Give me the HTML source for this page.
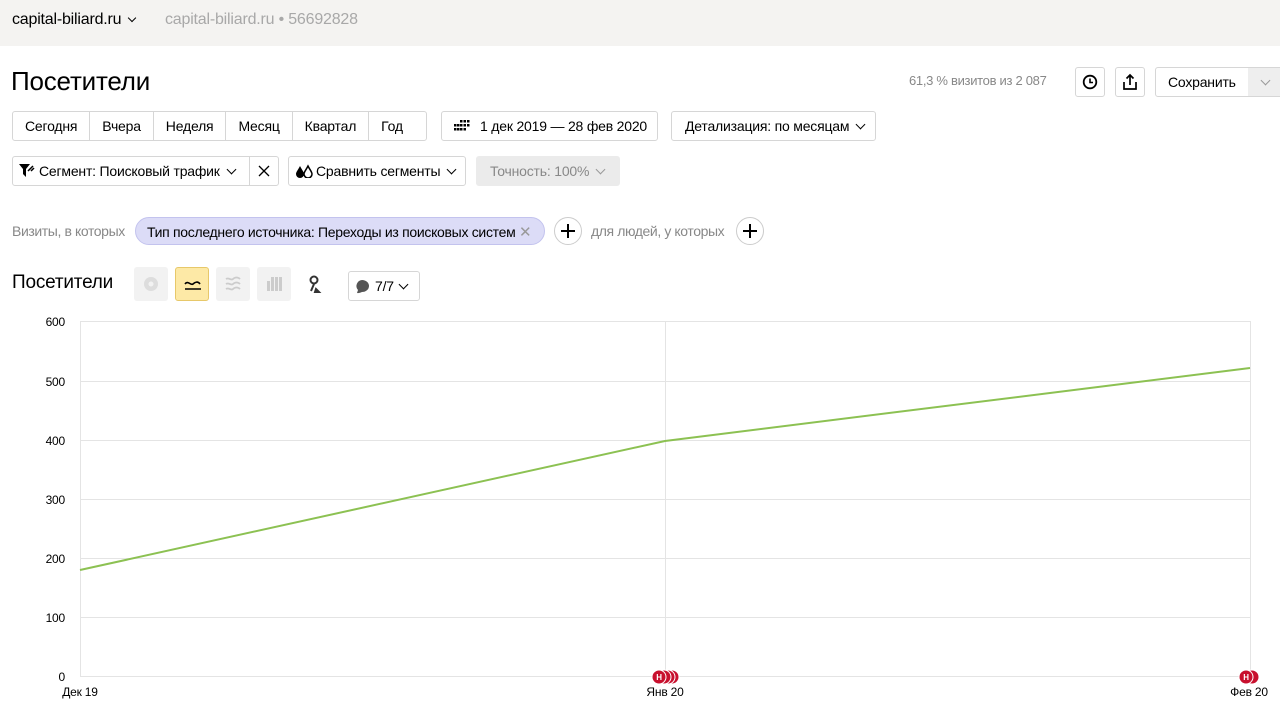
<!DOCTYPE html>
<html><head><meta charset="utf-8"><style>
*{box-sizing:border-box;margin:0;padding:0}
body{width:1280px;height:705px;background:#fff;font-family:"Liberation Sans",sans-serif;color:#000;position:relative;overflow:hidden;font-size:14px;letter-spacing:-0.2px}
.abs{position:absolute}
.top{left:0;top:0;width:1280px;height:46px;background:#f4f3f1}
.btn{position:absolute;height:30px;border:1px solid #d6d6d6;border-radius:3px;background:#fff;display:flex;align-items:center;font-size:14px;white-space:nowrap}
.seg{display:flex;height:100%;align-items:center;padding:0 12px;border-right:1px solid #d6d6d6}
.seg:last-child{border-right:none}
.chev{display:inline-block;width:7px;height:7px;border-right:1.3px solid #000;border-bottom:1.3px solid #000;transform:rotate(45deg);margin:-4px 2px 0 8px}
.gray .chev{border-color:#999}
.ib{position:absolute;width:34px;height:34px;border-radius:3px;background:#f2f2f2;top:267px}
</style></head><body>
<div class="abs top"></div>
<div class="abs" style="left:12px;top:11px;font-size:16px">capital-biliard.ru <span class="chev" style="margin:0 0 3px 3px;width:6px;height:6px;vertical-align:middle"></span></div>
<div class="abs" style="left:165px;top:11px;font-size:16px;color:#a8a8a8">capital-biliard.ru • 56692828</div>

<div class="abs" style="left:11px;top:66px;font-size:26px">Посетители</div>
<div class="abs" style="left:909px;top:73px;font-size:13px;color:#888;letter-spacing:-0.3px">61,3 % визитов из 2 087</div>
<div class="btn" style="left:1075px;top:67px;width:30px;justify-content:center"><svg width="16" height="16" viewBox="0 0 16 16"><circle cx="8" cy="8" r="6.3" fill="none" stroke="#000" stroke-width="1.8"/><path d="M8 4.5V8.5H11" fill="none" stroke="#000" stroke-width="1.6"/></svg></div>
<div class="btn" style="left:1115px;top:67px;width:30px;justify-content:center"><svg width="16" height="18" viewBox="0 0 16 18"><path d="M2 9v7h12V9M8 12V2M4.5 5.5L8 2l3.5 3.5" fill="none" stroke="#000" stroke-width="1.7"/></svg></div>
<div class="btn" style="left:1155px;top:67px;width:130px;overflow:hidden"><span style="padding:0 12px">Сохранить</span><span style="background:#eee;height:100%;flex:1;display:flex;align-items:center;padding-left:6px" class="gray"><span class="chev"></span></span></div>

<div class="btn" style="left:12px;top:111px;width:415px"><span class="seg">Сегодня</span><span class="seg">Вчера</span><span class="seg">Неделя</span><span class="seg">Месяц</span><span class="seg">Квартал</span><span class="seg">Год</span></div>
<div class="btn" style="left:441px;top:111px;width:217px;padding-left:12px"><svg width="16" height="12" viewBox="0 0 16 12" style="margin-right:10px"><g fill="#000"><rect x="6" y="0" width="2.5" height="2.5"/><rect x="9.5" y="0" width="2.5" height="2.5"/><rect x="13" y="0" width="2.5" height="2.5"/><rect x="0" y="4" width="2.5" height="2.5"/><rect x="3" y="4" width="2.5" height="2.5"/><rect x="6" y="4" width="2.5" height="2.5"/><rect x="9.5" y="4" width="2.5" height="2.5"/><rect x="13" y="4" width="2.5" height="2.5"/><rect x="0" y="8" width="2.5" height="2.5"/><rect x="3" y="8" width="2.5" height="2.5"/><rect x="6" y="8" width="2.5" height="2.5"/><rect x="9.5" y="8" width="2.5" height="2.5"/></g></svg>1 дек 2019 — 28 фев 2020</div>
<div class="btn" style="left:671px;top:111px;width:205px;padding-left:13px">Детализация: по месяцам<span class="chev"></span></div>

<div class="btn" style="left:12px;top:156px;width:267px"><span class="seg" style="padding:0 11px 0 6px;width:237px"><svg width="16" height="14" viewBox="0 0 16 14" style="margin-right:4px"><path d="M0 0h11L7 5v8L4 10V5z" fill="#000"/><path d="M9 7l5-5M12 7l3-3" stroke="#000" stroke-width="1.5"/></svg>Сегмент: Поисковый трафик<span class="chev"></span></span><span style="flex:1;display:flex;justify-content:center"><svg width="12" height="12" viewBox="0 0 12 12"><path d="M1 1l10 10M11 1L1 11" stroke="#000" stroke-width="1.3"/></svg></span></div>
<div class="btn" style="left:288px;top:156px;width:178px;padding-left:6px"><svg width="18" height="14" viewBox="0 0 18 14" style="margin-right:3px"><path d="M5 2C3 6 1 8 1 10a4 4 0 008 0c0-2-2-4-4-8z" fill="#000"/><path d="M13 2c-2 4-4 6-4 8a4 4 0 008 0c0-2-2-4-4-8z" fill="#fff" stroke="#000" stroke-width="1.5"/></svg>Сравнить сегменты<span class="chev"></span></div>
<div class="btn gray" style="left:476px;top:156px;width:144px;background:#ebebeb;border-color:#ebebeb;color:#888;padding-left:13px">Точность: 100%<span class="chev"></span></div>

<div class="abs" style="left:12px;top:223px;color:#888;font-size:14px;letter-spacing:-0.4px">Визиты, в которых</div>
<div class="abs" style="left:135px;top:217px;width:410px;height:28px;border-radius:14px;background:#dcdcf7;border:1px solid #c3c3ee;font-size:14px;padding:5px 0 0 11px;white-space:nowrap;letter-spacing:-0.3px">Тип последнего источника: Переходы из поисковых систем <span style="color:#999;font-size:15px">✕</span></div>
<div class="abs" style="left:554px;top:217px;width:28px;height:28px;border-radius:50%;border:1px solid #ccc"><svg width="28" height="28" viewBox="0 0 28 28" class="abs" style="left:-1px;top:-1px"><path d="M14 7v14M7 14h14" stroke="#000" stroke-width="2"/></svg></div>
<div class="abs" style="left:591px;top:223px;color:#888;font-size:14px;letter-spacing:-0.4px">для людей, у которых</div>
<div class="abs" style="left:736px;top:217px;width:28px;height:28px;border-radius:50%;border:1px solid #ccc"><svg width="28" height="28" viewBox="0 0 28 28" class="abs" style="left:-1px;top:-1px"><path d="M14 7v14M7 14h14" stroke="#000" stroke-width="2"/></svg></div>

<div class="abs" style="left:12px;top:272px;font-size:19px">Посетители</div>
<div class="ib" style="left:134px"><svg width="34" height="34"><circle cx="17" cy="17" r="7" fill="#ddd"/><circle cx="17" cy="17" r="2.5" fill="#f2f2f2"/></svg></div>
<div class="ib" style="left:175px;background:#fde9a6;border:1px solid #e7c86a"><svg width="34" height="34"><path d="M9 16c3-4 6 2 8 0s5-3 7 0M9 21h16" fill="none" stroke="#000" stroke-width="1.6"/></svg></div>
<div class="ib" style="left:216px"><svg width="34" height="34"><path d="M10 12c3-2 5 2 7 0s5-2 7 0M10 17c3-2 5 2 7 0s5-2 7 0M10 22c3-2 5 2 7 0s5-2 7 0" fill="none" stroke="#ccc" stroke-width="1.8"/></svg></div>
<div class="ib" style="left:257px"><svg width="34" height="34"><g fill="#ccc"><rect x="10" y="14" width="3" height="10"/><rect x="14" y="10" width="3" height="14"/><rect x="18" y="10" width="3" height="14"/><rect x="22" y="10" width="3" height="14"/></g></svg></div>
<div class="abs" style="left:298px;top:267px"><svg width="34" height="34"><circle cx="16" cy="13" r="3.5" fill="none" stroke="#333" stroke-width="2"/><path d="M13 24l3-7M18 22l3 3-4 0z" stroke="#333" stroke-width="2" fill="#333"/></svg></div>
<div class="btn" style="left:348px;top:271px;width:72px;padding-left:4px"><svg width="18" height="16"><path d="M9 2a7 6 0 110 12 8 8 0 01-5 1l1-3A6 6 0 019 2z" fill="#555"/></svg><span style="margin-left:4px">7/7</span><span class="chev" style="margin-left:6px"></span></div>

<svg class="abs" style="left:0;top:310px" width="1280" height="395" viewBox="0 310 1280 395">
<g stroke="#e4e4e4" stroke-width="1">
<path d="M80 321.5H1250M80 381.5H1250M80 440.5H1250M80 499.5H1250M80 558.5H1250M80 617.5H1250M80 676.5H1250"/>
<path d="M80.5 321V676M665.5 321V676M1250.5 321V676"/>
</g>
<g font-family="Liberation Sans" font-size="12" fill="#000" text-anchor="end">
<text x="65" y="326">600</text><text x="65" y="386">500</text><text x="65" y="445">400</text><text x="65" y="504">300</text><text x="65" y="563">200</text><text x="65" y="622">100</text><text x="65" y="681">0</text>
</g>
<g font-family="Liberation Sans" font-size="12" fill="#000" text-anchor="middle">
<text x="80" y="696">Дек 19</text><text x="665" y="696">Янв 20</text><text x="1249" y="696">Фев 20</text>
</g>
<polyline points="80,570 665,441 1250,368" fill="none" stroke="#8cc152" stroke-width="2"/>
<g fill="#c8102e" stroke="#fff" stroke-width="1">
<circle cx="672" cy="677" r="7"/><circle cx="668" cy="677" r="7"/><circle cx="664" cy="677" r="7"/><circle cx="659" cy="677" r="7"/>
<circle cx="1252" cy="677" r="7"/><circle cx="1246" cy="677" r="7"/>
</g>
<g font-family="Liberation Sans" font-size="8" font-weight="bold" fill="#fff" text-anchor="middle"><text x="659" y="680">Н</text><text x="1246" y="680">Н</text></g>
</svg>
</body></html>
